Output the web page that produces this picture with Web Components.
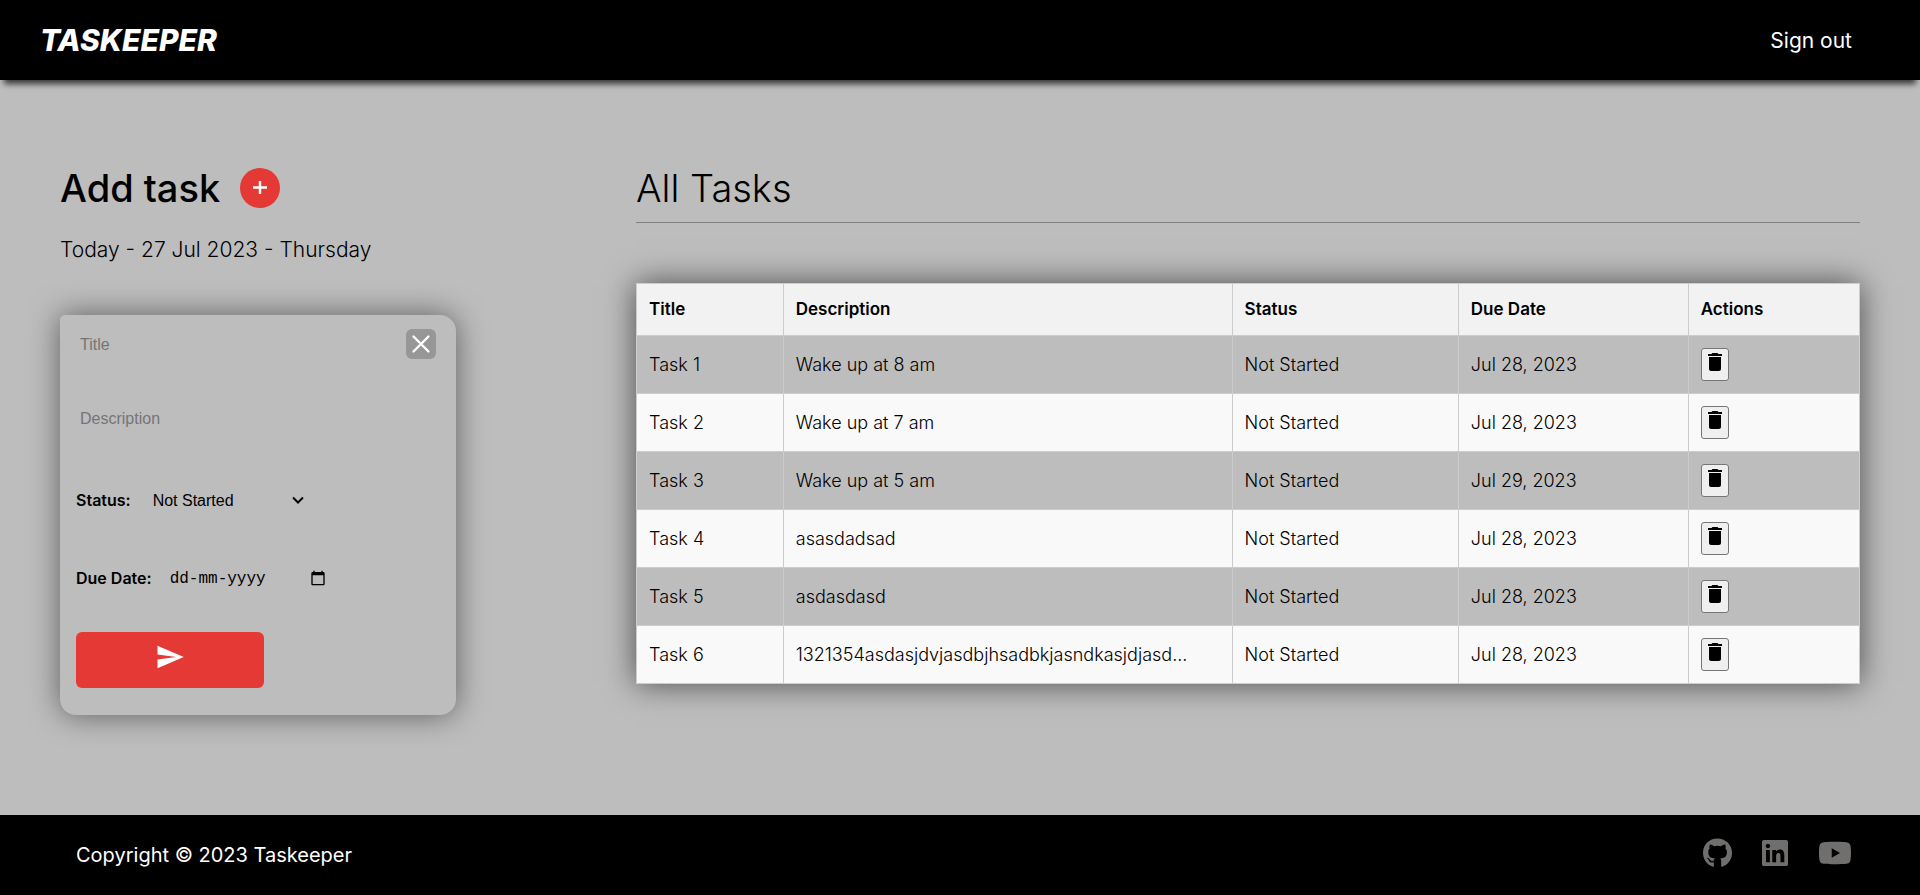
<!DOCTYPE html>
<html lang="en">
<head>
<meta charset="utf-8">
<meta name="viewport" content="width=device-width, initial-scale=1">
<title>Taskeeper</title>
<style>
  body { margin: 0; background: #bdbdbd; color: #000; font-family: Inter, "Open Sans", sans-serif; font-size: 16px; }
</style>
</head>
<body>
<tk-app></tk-app>

<template id="tk-app">
  <style>
    :host { display: flex; flex-direction: column; min-height: 100vh; }
    main { flex: 1; display: grid; grid-template-columns: 32fr 68fr; padding: 88px 60px 60px; }
    main > * { min-width: 0; }
  </style>
  <tk-header></tk-header>
  <main>
    <tk-add-task></tk-add-task>
    <tk-task-list>All Tasks</tk-task-list>
  </main>
  <tk-footer>Copyright © 2023 Taskeeper</tk-footer>
</template>

<template id="tk-header">
  <style>
    :host { display: block; box-shadow: 0 8px 6px -4px rgba(0,0,0,.7); }
    header { display: flex; align-items: center; justify-content: space-between; height: 80px; padding: 0 68px 0 40px; background: #000; }
    a { color: #fff; text-decoration: none; font-size: 21px; }
    .logo { font-size: 30px; font-weight: 800; font-style: italic; }
  </style>
  <header>
    <a class="logo" href="#">TASKEEPER</a>
    <nav><a href="#signout">Sign out</a></nav>
  </header>
</template>

<template id="tk-add-task">
  <style>
    :host { display: block; }
    .head { display: flex; align-items: center; gap: 20px; height: 40px; }
    h1 { margin: 0; font-size: 38px; line-height: 40px; font-weight: 500; }
    button { display: grid; place-items: center; width: 40px; height: 40px; padding: 0; border: 0; border-radius: 50%; background: #e53935; color: #fff; }
    p { margin: 27px 0 50px; font-size: 21px; line-height: 30px; font-weight: 300; }
    tk-task-form { width: 396px; }
  </style>
  <div class="head">
    <h1>Add task</h1>
    <button type="button" aria-label="Add task"><tk-icon name="plus" size="40"></tk-icon></button>
  </div>
  <p>Today - 27 Jul 2023 - Thursday</p>
  <tk-task-form></tk-task-form>
</template>

<template id="tk-task-form">
  <style>
    :host { display: block; box-sizing: border-box; max-width: 100%; padding: 14px 16px 27px; border-radius: 5px 16px 16px 16px; background: #bdbdbd; box-shadow: 0 0 30px rgba(0,0,0,.5); }
    form, .fields { display: flex; flex-direction: column; }
    form { gap: 39px; }
    .fields { gap: 48px; }
    .row { display: flex; align-items: center; height: 30px; }
    .title { justify-content: space-between; padding-right: 4px; }
    input, textarea, select { box-sizing: border-box; border: 0; outline: 0; background: transparent; color: #000; font: 16px "Liberation Sans", Arial, sans-serif; }
    input::placeholder, textarea::placeholder { color: #757575; opacity: 1; }
    #title { width: 240px; height: 30px; padding: 1px 4px 0; }
    textarea { height: 30px; padding: 0 4px; line-height: 24px; resize: none; overflow: hidden; }
    label { font-size: 16px; font-weight: 600; }
    .select { display: grid; align-items: center; margin-left: 18px; width: 156px; }
    .select > * { grid-area: 1 / 1; }
    .select tk-icon { justify-self: end; pointer-events: none; }
    select { width: 100%; height: 30px; padding: 0 4px; appearance: none; }
    .date { display: flex; align-items: center; justify-content: space-between; width: 160px; margin-left: 16px; }
    .date input { width: 120px; height: 30px; padding: 1px 2px 0; font-family: "Liberation Mono", monospace; }
    .date input::placeholder { color: #000; }
    button { display: grid; place-items: center; padding: 0; border: 0; color: #fff; }
    .close { width: 30px; height: 30px; border-radius: 6px; background: #979797; }
    .pick { width: 20px; height: 20px; background: transparent; color: #000; }
    .send { width: 188px; height: 56px; padding-bottom: 6px; border-radius: 6px; background: #e53935; }
  </style>
  <form>
    <div class="fields">
      <div class="row title">
        <input id="title" placeholder="Title" aria-label="Title">
        <button class="close" type="button" aria-label="Close"><tk-icon name="close" size="30"></tk-icon></button>
      </div>
      <textarea placeholder="Description" aria-label="Description" rows="1"></textarea>
      <div class="row">
        <label for="status">Status:</label>
        <div class="select">
          <select id="status"><option>Not Started</option><option>In Progress</option><option>Completed</option></select>
          <tk-icon name="chevron" size="14"></tk-icon>
        </div>
      </div>
      <div class="row">
        <label for="due">Due Date:</label>
        <div class="date">
          <input id="due" placeholder="dd-mm-yyyy">
          <button class="pick" type="button" aria-label="Pick a date"><tk-icon name="calendar" size="16"></tk-icon></button>
        </div>
      </div>
    </div>
    <button class="send" type="button" aria-label="Send"><tk-icon name="send" size="30"></tk-icon></button>
  </form>
</template>

<template id="tk-task-list">
  <style>
    :host { display: block; }
    h2 { margin: 0 0 60px; padding-bottom: 14px; border-bottom: 1px solid #808080; font-size: 38px; line-height: 40px; font-weight: 300; }
    table { width: 100%; table-layout: fixed; border-collapse: collapse; background: #bdbdbd; box-shadow: 0 0 30px rgba(0,0,0,.6); }
    th, td { padding: 12px; border: 1px solid #ccc; font-size: 18px; line-height: 27px; text-align: left; }
    th { background: #f2f2f2; font-weight: 600; font-size: 17px; }
    td { height: 33px; font-weight: 300; white-space: nowrap; overflow: hidden; text-overflow: ellipsis; }
    tbody tr:nth-child(even) { background: #f9f9f9; }
    button { display: block; padding: 1px 1px 6px; border: 1px solid #767676; border-radius: 3px; background: #efefef; color: #000; }
  </style>
  <h2><slot></slot></h2>
  <table>
    <colgroup><col style="width:12%"><col style="width:36.7%"><col style="width:18.5%"><col style="width:18.8%"><col style="width:14%"></colgroup>
    <thead><tr><th>Title</th><th>Description</th><th>Status</th><th>Due Date</th><th>Actions</th></tr></thead>
    <tbody></tbody>
  </table>
</template>

<template id="tk-footer">
  <style>
    :host { display: block; }
    footer { display: flex; align-items: center; justify-content: space-between; height: 80px; padding: 0 68px 0 76px; background: #000; color: #fff; font-size: 20px; }
    nav { display: flex; align-items: center; gap: 30px; padding-bottom: 4px; }
    a { display: block; color: #706f6d; }
  </style>
  <footer>
    <span><slot></slot></span>
    <nav>
      <a href="#github" aria-label="GitHub"><tk-icon name="github" size="30"></tk-icon></a>
      <a href="#linkedin" aria-label="LinkedIn"><tk-icon name="linkedin" size="30"></tk-icon></a>
      <a href="#youtube" aria-label="YouTube"><tk-icon name="youtube" size="30"></tk-icon></a>
    </nav>
  </footer>
</template>

<script>
const ICONS = {
  plus: [40, 40, '<path d="M13 19.500h14M20 13v13" stroke="currentColor" stroke-width="2.400" fill="none"/>'],
  close: [30, 30, '<path d="M7.500 7.500l15 15M22.500 7.500l-15 15" stroke="currentColor" stroke-width="2.400" stroke-linecap="round" fill="none"/>'],
  chevron: [14, 14, '<path d="M2 4.500l5 5 5-5" stroke="currentColor" stroke-width="2" fill="none"/>'],
  calendar: [24, 24, '<path d="M20 3h-1V1h-2v2H7V1H5v2H4c-1.100 0-2 .9-2 2v16c0 1.100.9 2 2 2h16c1.100 0 2-.9 2-2V5c0-1.100-.9-2-2-2zm0 18H4V8h16v13z" fill="currentColor"/>'],
  send: [24, 24, '<path d="M2.010 21L23 12 2.010 3 2 10l15 2-15 2z" fill="currentColor"/>'],
  trash: [24, 24, '<path d="M6 19c0 1.100.9 2 2 2h8c1.100 0 2-.9 2-2V7H6v12zM19 4h-3.500l-1-1h-5l-1 1H5v2h14V4z" fill="currentColor"/>'],
  github: [496, 512, '<path d="M165.900 397.400c0 2-2.300 3.600-5.200 3.600-3.300.3-5.600-1.300-5.600-3.600 0-2 2.300-3.600 5.200-3.600 3-.3 5.600 1.300 5.600 3.600zm-31.100-4.500c-.7 2 1.300 4.300 4.300 4.900 2.600 1 5.600 0 6.200-2s-1.300-4.300-4.300-5.200c-2.600-.7-5.500.3-6.200 2.300zm44.200-1.700c-2.900.7-4.900 2.600-4.600 4.900.3 2 2.900 3.300 5.900 2.600 2.900-.7 4.900-2.600 4.600-4.600-.3-1.900-3-3.200-5.900-2.900zM244.800 8C106.100 8 0 113.300 0 252c0 110.900 69.800 205.800 169.500 239.200 12.800 2.300 17.300-5.600 17.300-12.100 0-6.200-.3-40.400-.3-61.400 0 0-70 15-84.700-29.800 0 0-11.400-29.100-27.800-36.600 0 0-22.900-15.700 1.600-15.400 0 0 24.900 2 38.600 25.800 21.900 38.600 58.600 27.500 72.900 20.900 2.300-16 8.800-27.100 16-33.700-55.900-6.200-112.300-14.300-112.300-110.500 0-27.500 7.600-41.300 23.600-58.900-2.600-6.500-11.100-33.300 2.600-67.900 20.900-6.500 69 27 69 27 20-5.600 41.500-8.500 62.800-8.500s42.800 2.900 62.800 8.500c0 0 48.100-33.600 69-27 13.700 34.700 5.200 61.400 2.600 67.900 16 17.700 25.800 31.500 25.800 58.900 0 96.500-58.900 104.200-114.800 110.500 9.200 7.900 17 22.900 17 46.400 0 33.700-.3 75.400-.3 83.600 0 6.500 4.600 14.400 17.300 12.100C428.200 457.800 496 362.900 496 252 496 113.300 383.500 8 244.800 8z" fill="currentColor"/>'],
  linkedin: [448, 512, '<path d="M416 32H31.900C14.300 32 0 46.500 0 64.300v383.400C0 465.500 14.300 480 31.900 480H416c17.600 0 32-14.500 32-32.300V64.300c0-17.800-14.400-32.300-32-32.300zM135.400 416H69V202.200h66.500V416zm-33.200-243c-21.300 0-38.500-17.300-38.500-38.500S80.900 96 102.200 96c21.200 0 38.500 17.300 38.500 38.500 0 21.300-17.200 38.500-38.500 38.500zm282.100 243h-66.400V312c0-24.800-.5-56.700-34.500-56.700-34.600 0-39.900 27-39.900 54.900V416h-66.400V202.200h63.700v29.200h.9c8.900-16.800 30.600-34.500 62.900-34.500 67.200 0 79.700 44.300 79.700 101.900V416z" fill="currentColor"/>'],
  youtube: [576, 512, '<path d="M549.655 124.083c-6.281-23.650-24.787-42.276-48.284-48.597C458.781 64 288 64 288 64S117.220 64 74.629 75.486c-23.497 6.322-42.003 24.947-48.284 48.597-11.412 42.867-11.412 132.305-11.412 132.305s0 89.438 11.412 132.305c6.281 23.650 24.787 41.500 48.284 47.821C117.220 448 288 448 288 448s170.780 0 213.371-11.486c23.497-6.321 42.003-24.171 48.284-47.821 11.412-42.867 11.412-132.305 11.412-132.305s0-89.438-11.412-132.305zm-317.510 213.508V175.185l142.739 81.205-142.739 81.201z" fill="currentColor"/>'],
};

const TASKS = [
  ['Task 1', 'Wake up at 8 am', 'Not Started', 'Jul 28, 2023'],
  ['Task 2', 'Wake up at 7 am', 'Not Started', 'Jul 28, 2023'],
  ['Task 3', 'Wake up at 5 am', 'Not Started', 'Jul 29, 2023'],
  ['Task 4', 'asasdadsad', 'Not Started', 'Jul 28, 2023'],
  ['Task 5', 'asdasdasd', 'Not Started', 'Jul 28, 2023'],
  ['Task 6', '1321354asdasjdvjasdbjhsadbkjasndkasjdjasd...', 'Not Started', 'Jul 28, 2023'],
];

class TkElement extends HTMLElement {
  constructor() {
    super();
    this.attachShadow({ mode: 'open' });
    const template = document.getElementById(this.localName);
    if (template) this.shadowRoot.append(template.content.cloneNode(true));
  }
}

/* <tk-icon name size>: size is the height in pixels, the width follows the glyph's own box */
class TkIcon extends TkElement {
  connectedCallback() {
    const [w, h, body] = ICONS[this.getAttribute('name')];
    const size = Number(this.getAttribute('size'));
    this.shadowRoot.innerHTML = `<style>:host{display:block}svg{display:block}</style>
      <svg viewBox="0 0 ${w} ${h}" width="${Math.round(size * w / h)}" height="${size}" aria-hidden="true">${body}</svg>`;
  }
}

class TkTaskList extends TkElement {
  connectedCallback() {
    this.shadowRoot.querySelector('tbody').innerHTML = TASKS.map(task =>
      `<tr>${task.map(value => `<td>${value}</td>`).join('')}<td><button type="button" aria-label="Delete ${task[0]}"><tk-icon name="trash" size="24"></tk-icon></button></td></tr>`).join('');
  }
}

customElements.define('tk-icon', TkIcon);
customElements.define('tk-header', class extends TkElement {});
customElements.define('tk-task-form', class extends TkElement {});
customElements.define('tk-add-task', class extends TkElement {});
customElements.define('tk-task-list', TkTaskList);
customElements.define('tk-footer', class extends TkElement {});
customElements.define('tk-app', class extends TkElement {});
</script>
</body>
</html>
